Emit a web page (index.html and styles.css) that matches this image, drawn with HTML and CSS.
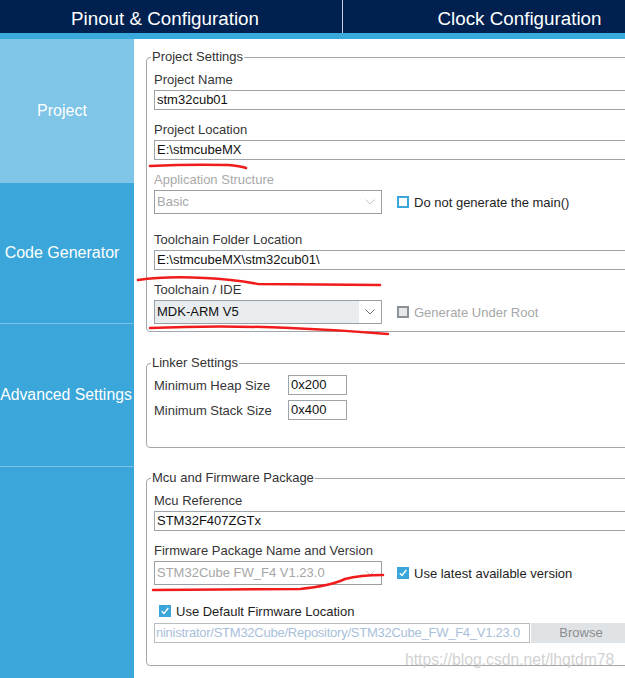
FILE: index.html
```html
<!DOCTYPE html>
<html>
<head>
<meta charset="utf-8">
<link rel="stylesheet" href="styles.css">
</head>
<body>
<div class="topbar">
  <div class="tab tab-first">Pinout &amp; Configuration</div>
  <div class="tab tab-second">Clock Configuration</div>
</div>
<div class="strip"></div>
<div class="main">
  <nav class="sidebar">
    <div class="side-item side-active side-1">Project</div>
    <div class="side-item side-2">Code Generator</div>
    <div class="side-item side-3">Advanced Settings</div>
    <div class="side-item side-rest"></div>
  </nav>
  <div class="content">
    <fieldset class="group g-project">
      <legend>Project Settings</legend>
      <div class="field">
        <div class="lbl">Project Name</div>
        <div class="input">stm32cub01</div>
      </div>
      <div class="field">
        <div class="lbl">Project Location</div>
        <div class="input">E:\stmcubeMX</div>
      </div>
      <div class="field">
        <div class="lbl lbl-off">Application Structure</div>
        <div class="sel-row">
          <div class="select sel-off">
            <span class="sel-text">Basic</span>
            <span class="sel-arrow"><svg width="10" height="6" viewBox="0 0 10 6"><polyline points="0.5,0.5 5,5 9.5,0.5" fill="none" stroke="#c4c6c8" stroke-width="1"/></svg></span>
          </div>
          <span class="cb cb-open"></span>
          <span class="cb-text">Do not generate the main()</span>
        </div>
      </div>
      <div class="field field-wide">
        <div class="lbl">Toolchain Folder Location</div>
        <div class="input">E:\stmcubeMX\stm32cub01\</div>
      </div>
      <div class="field">
        <div class="lbl">Toolchain / IDE</div>
        <div class="sel-row">
          <div class="select sel-ide">
            <span class="sel-text">MDK-ARM V5</span>
            <span class="sel-arrow sel-arrow-white"><svg width="10" height="6" viewBox="0 0 10 6"><polyline points="0.5,0.5 5,5 9.5,0.5" fill="none" stroke="#6f7378" stroke-width="1"/></svg></span>
          </div>
          <span class="cb cb-disabled"></span>
          <span class="cb-text cb-text-off">Generate Under Root</span>
        </div>
      </div>
    </fieldset>

    <fieldset class="group g-linker">
      <legend>Linker Settings</legend>
      <div class="lrow lrow-first">
        <div class="lrow-lbl">Minimum Heap Size</div>
        <div class="input input-small">0x200</div>
      </div>
      <div class="lrow">
        <div class="lrow-lbl">Minimum Stack Size</div>
        <div class="input input-small">0x400</div>
      </div>
    </fieldset>

    <fieldset class="group g-mcu">
      <legend>Mcu and Firmware Package</legend>
      <div class="field">
        <div class="lbl">Mcu Reference</div>
        <div class="input">STM32F407ZGTx</div>
      </div>
      <div class="field">
        <div class="lbl">Firmware Package Name and Version</div>
        <div class="sel-row">
          <div class="select sel-off">
            <span class="sel-text">STM32Cube FW_F4 V1.23.0</span>
            <span class="sel-arrow"><svg width="10" height="6" viewBox="0 0 10 6"><polyline points="0.5,0.5 5,5 9.5,0.5" fill="none" stroke="#c4c6c8" stroke-width="1"/></svg></span>
          </div>
          <span class="cb cb-on"><svg width="8" height="8" viewBox="0 0 8 8"><polyline points="0.8,4.2 3,6.5 7.3,1" fill="none" stroke="#fff" stroke-width="1.4"/></svg></span>
          <span class="cb-text">Use latest available version</span>
        </div>
      </div>
      <div class="def-row">
        <span class="cb cb-on cb-def"><svg width="8" height="8" viewBox="0 0 8 8"><polyline points="0.8,4.2 3,6.5 7.3,1" fill="none" stroke="#fff" stroke-width="1.4"/></svg></span>
        <span class="cb-text">Use Default Firmware Location</span>
      </div>
      <div class="path-row">
        <div class="input input-path">ninistrator/STM32Cube/Repository/STM32Cube_FW_F4_V1.23.0</div>
        <div class="browse">Browse</div>
      </div>
    </fieldset>
  </div>
</div>

<svg class="marks" width="625" height="678" viewBox="0 0 625 678">
  <g fill="none" stroke="#f01c1c" stroke-width="2.5" stroke-linecap="round">
    <path d="M150 166 Q 190 164 228 165 Q 240 166 246 168"/>
    <path d="M138 280 Q 165 276 205 278 Q 232 279 258 284 L 380 285"/>
    <path d="M150 328 Q 220 325 290 328 Q 340 330 388 334"/>
    <path d="M153 590 L 300 589 Q 330 586 345 579 Q 360 575 383 575"/>
  </g>
</svg>
<div class="watermark">https://blog.csdn.net/lhqtdm78</div>
</body>
</html>
```

FILE: styles.css
```css
* { box-sizing: border-box; }
html, body { margin: 0; padding: 0; }
body {
  width: 625px;
  height: 678px;
  overflow: hidden;
  position: relative;
  background: #ffffff;
  font-family: "Liberation Sans", Arial, sans-serif;
}

.topbar {
  display: flex;
  height: 33px;
  background: #00204f;
  overflow: hidden;
}
.tab {
  flex: 0 0 343px;
  color: #ffffff;
  font-size: 18.8px;
  line-height: 33px;
  padding-top: 2px;
  text-align: center;
  white-space: nowrap;
}
.tab-first { border-right: 1px solid #c9d0dc; padding-right: 12px; }
.tab-second { padding-left: 10px; }

.strip { height: 6px; background: #3aa9dc; }

.main { display: flex; height: 639px; }

.sidebar {
  flex: 0 0 134px;
  min-width: 0;
  width: 134px;
  display: flex;
  flex-direction: column;
  background: #3aa6d9;
}
.side-item {
  display: flex;
  align-items: center;
  justify-content: center;
  padding-right: 10px;
  color: #ffffff;
  font-size: 16px;
  white-space: nowrap;
}
.side-active { background: #7ec5e8; }
.side-1 { height: 144px; }
.side-2 { height: 141px; border-bottom: 1px solid #7cc3e8; }
.side-3 { height: 143px; border-bottom: 1px solid #7cc3e8; padding-right: 2px; font-size: 15.8px; }
.side-rest { flex: 1; }

.content {
  flex: 0 0 506px;
  min-width: 0;
  padding: 10px 0 0 12px;
}

.group {
  margin: 0;
  min-width: 0;
  border: 1px solid #a3a7ab;
  border-radius: 4px;
  padding: 7px 8px 7px 7px;
}
.group legend {
  margin-left: -3px;
  padding: 0 1px;
  font-size: 13px;
  line-height: 16px;
  color: #333333;
}
.g-linker { margin-top: 23px; padding-top: 4px; padding-bottom: 27px; }
.g-mcu { margin-top: 22px; padding-bottom: 22px; }

.field + .field { margin-top: 12px; }
.field-wide { margin-top: 18px !important; }

.lbl {
  font-size: 13px;
  line-height: 16px;
  color: #363636;
  margin-bottom: 2px;
  white-space: nowrap;
}
.lbl-off { color: #a9a9a9; }

.input {
  height: 20px;
  border: 1px solid #9fa4a9;
  background: #ffffff;
  font-size: 13px;
  line-height: 18px;
  padding-left: 2px;
  color: #111111;
  white-space: nowrap;
  overflow: hidden;
}

.sel-row {
  display: flex;
  align-items: center;
  height: 24px;
}
.select {
  flex: 0 0 228px;
  height: 24px;
  display: flex;
  border: 1px solid #9a9fa4;
  background: #ffffff;
  font-size: 13px;
}
.sel-text {
  flex: 1;
  padding-left: 2px;
  line-height: 22px;
  white-space: nowrap;
  overflow: hidden;
}
.sel-off .sel-text { color: #a6a6a6; }
.sel-ide .sel-text { background: #e9ecef; color: #111111; }
.sel-arrow {
  flex: 0 0 22px;
  display: flex;
  align-items: center;
  justify-content: center;
}
.sel-arrow-white { background: #ffffff; }

.cb {
  flex: 0 0 12px;
  width: 12px;
  height: 12px;
  margin-left: 15px;
  display: inline-flex;
  align-items: center;
  justify-content: center;
}
.cb-open { border: 2px solid #3aa6d9; background: #ffffff; }
.cb-disabled { border: 2px solid #8c9196; background: #e5e7e9; }
.cb-on { background: #3aa6d9; }
.cb-text {
  margin-left: 5px;
  font-size: 13px;
  color: #1e1e1e;
  white-space: nowrap;
}
.cb-text-off { color: #a6a6a6; }

.lrow {
  display: flex;
  align-items: center;
  height: 20px;
  margin-top: 5px;
}
.lrow-first { margin-top: 0; }
.lrow-lbl {
  flex: 0 0 134px;
  font-size: 13px;
  color: #363636;
  white-space: nowrap;
}
.input-small { flex: 0 0 59px; }

.def-row {
  display: flex;
  align-items: center;
  height: 16px;
  margin-top: 18px;
}
.cb-def { margin-left: 5px; }

.path-row {
  display: flex;
  margin-top: 4px;
  height: 20px;
}
.input-path {
  flex: 0 0 376px;
  border-color: #b9bdc1;
  color: #a9c0da;
  padding-left: 1px;
  letter-spacing: -0.25px;
}
.browse {
  flex: 0 0 100px;
  margin-left: 1px;
  background: #dfe3e6;
  color: #8a8d90;
  font-size: 13px;
  line-height: 20px;
  text-align: center;
}

.marks {
  position: absolute;
  left: 0;
  top: 0;
  pointer-events: none;
}
.watermark {
  position: absolute;
  left: 405px;
  top: 651px;
  font-size: 15.7px;
  color: #d2d2d2;
  white-space: nowrap;
}
```
